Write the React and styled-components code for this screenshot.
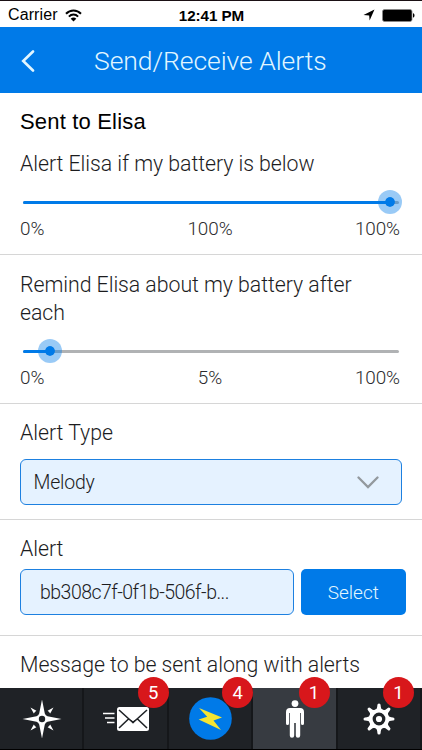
import React, { useState } from "react";
import styled, { createGlobalStyle } from "styled-components";

const GlobalStyle = createGlobalStyle`
  * {
    box-sizing: border-box;
  }

  body {
    margin: 0;
    background: #fff;
    font-family: Roboto, "Noto Sans", sans-serif;
    font-weight: 300;
    color: #1c1c1e;
  }
`;

const Screen = styled.div`
  display: flex;
  flex-direction: column;
  width: 422px;
  height: 750px;
  overflow: hidden;
  border-top: 1px solid #1a1014;
  background: #fff;
`;

const StatusBar = styled.div`
  display: grid;
  grid-template-columns: 1fr auto 1fr;
  align-items: center;
  flex: none;
  height: 26px;
  padding: 2px 7px 0 8px;
  font-family: "Liberation Sans", Arial, sans-serif;
  font-size: 16px;
  font-weight: 400;
  color: #000;
`;

const Carrier = styled.div`
  display: flex;
  align-items: center;
  gap: 7px;
  letter-spacing: 0.1px;
`;

const Clock = styled.div`
  font-size: 15.2px;
  font-weight: 700;
  letter-spacing: -0.05px;
`;

const StatusIcons = styled.div`
  display: flex;
  justify-content: flex-end;
  align-items: center;
  gap: 7px;
`;

const Header = styled.header`
  display: flex;
  align-items: center;
  flex: none;
  height: 66px;
  padding: 1px 0 0 21px;
  background: #007ae8;
  color: #e2f6ff;
`;

const BackButton = styled.button`
  display: flex;
  width: 73px;
  padding: 0;
  border: none;
  background: none;
  color: inherit;
`;

const Title = styled.h1`
  margin: 0;
  font-size: 26.5px;
  font-weight: 300;
  letter-spacing: -0.05px;
  white-space: nowrap;
`;

const Content = styled.main`
  flex: none;
  height: 595px;
  overflow: hidden;
`;

const Section = styled.section`
  height: ${({ $height }) => $height}px;
  padding: ${({ $top }) => $top}px 20px 0;
  border-bottom: 1px solid #d6d6d6;
`;

const Heading = styled.h2`
  margin: 0 0 14px;
  font-family: "Liberation Sans", Arial, sans-serif;
  font-size: 22px;
  line-height: 28px;
  font-weight: 400;
  color: #000;
  letter-spacing: 0.18px;
`;

const Label = styled.div`
  padding-right: 20px;
  font-size: 21.3px;
  line-height: 28px;
  letter-spacing: -0.05px;
`;

const Slider = styled.div`
  position: relative;
  display: flex;
  align-items: center;
  height: 24px;
  margin: 12px 0 0 3px;
`;

const Track = styled.div`
  width: 376px;
  height: 3px;
  border-radius: 2px;
  overflow: hidden;
  background: #b0b2b4;
`;

const Fill = styled.div`
  height: 100%;
  background: #007ae8;
`;

const Thumb = styled.div`
  position: absolute;
  top: 0;
  width: 24px;
  height: 24px;
  margin-left: -12px;
  border: 7.5px solid rgba(0, 122, 232, 0.4);
  border-radius: 50%;
  background: #007ae8;
  background-clip: padding-box;
`;

const Scale = styled.div`
  display: grid;
  grid-template-columns: 1fr auto 1fr;
  width: 380px;
  margin-top: 3px;
  font-size: 18.9px;
  line-height: 24px;
  letter-spacing: -0.1px;
  color: #2c2c2e;

  span:last-child {
    text-align: right;
  }
`;

const FieldRow = styled.div`
  display: flex;
  gap: 6.5px;
  margin-top: ${({ $top }) => $top}px;
`;

const Field = styled.div`
  display: flex;
  align-items: center;
  justify-content: space-between;
  flex: none;
  width: ${({ $width }) => $width}px;
  height: 46px;
  padding: 0 22px 0 ${({ $left }) => $left}px;
  border: 1.5px solid #1d80e0;
  border-radius: 6px;
  background: #e5f2ff;
  font-size: 19.5px;
  letter-spacing: ${({ $spacing }) => $spacing || 0}px;
`;

const SelectButton = styled.button`
  flex: none;
  width: 105.5px;
  height: 46px;
  padding: 0;
  border: none;
  border-radius: 5px;
  background: #007ae8;
  color: #e2f6ff;
  font: 300 19px Roboto, sans-serif;
`;

const TabBar = styled.nav`
  display: flex;
  flex: none;
  height: 62px;
  background: #1f2226;
  border-bottom: 1px solid #000;
`;

const Tab = styled.div`
  position: relative;
  display: flex;
  align-items: center;
  justify-content: center;
  flex: none;
  width: 84.4px;
  padding-left: ${({ $indent }) => $indent || 0}px;
  border-right: 2px solid #15171a;
  background: ${({ $active }) => ($active ? "#373b41" : "#1f2226")};
`;

const Badge = styled.span`
  position: absolute;
  top: -11px;
  right: ${({ $right }) => $right}px;
  width: 31px;
  height: 31px;
  border-radius: 50%;
  background: #d8171b;
  color: #fff;
  font-size: 18.5px;
  font-weight: 400;
  line-height: 32px;
  text-align: center;
`;

const WifiIcon = () => (
  <svg width="17" height="13" viewBox="0 0 17 13">
    <g fill="none" stroke="#000" strokeWidth="2">
      <path d="M1 4.800C5.200.5 11.800.5 16 4.800" />
      <path d="M3.900 7.600c2.600-2.700 6.600-2.700 9.200 0" />
    </g>
    <path d="M8.500 12.600 5.700 9.700c1.600-1.600 4-1.600 5.600 0z" />
  </svg>
);

const LocationIcon = () => (
  <svg width="12" height="12" viewBox="0 0 12 12">
    <path d="M11.500.5 6.600 11.500 6.200 6.400.5 6z" />
  </svg>
);

const BatteryIcon = () => (
  <svg width="33" height="13" viewBox="0 0 33 13">
    <rect x=".5" y=".5" width="29.5" height="12" rx="2" stroke="#888" strokeWidth=".8" />
    <path d="M31 4.300c2 .5 2 3.900 0 4.400z" />
  </svg>
);

const BackIcon = () => (
  <svg width="14" height="22" viewBox="0 0 14 22">
    <path d="M12 1.500 2.200 11 12 20.500" fill="none" stroke="currentColor" strokeWidth="2.6" strokeLinecap="round" />
  </svg>
);

const ChevronIcon = () => (
  <svg width="22" height="13" viewBox="0 0 22 13">
    <path d="M1.500 1.500 11 11l9.500-9.500" fill="none" stroke="#93999e" strokeWidth="2.3" strokeLinecap="round" />
  </svg>
);

const CompassIcon = () => (
  <svg width="40" height="40" viewBox="-20 -20 40 40">
    <g fill="#fff">
      <path d="M0-19.500 2.800-5.500Q3.500-3.500 5.500-2.800L19.500 0 5.500 2.800Q3.500 3.500 2.800 5.500L0 19.500-2.800 5.500Q-3.500 3.500-5.500 2.800L-19.500 0-5.500-2.800Q-3.500-3.500-2.800-5.500z" />
      {[0, 90, 180, 270].map((angle) => (
        <path key={angle} transform={`rotate(${angle})`} d="M11.500-11.500 8.200-5.600Q7.200-7.200 5.600-8.200z" />
      ))}
    </g>
    <circle r="3.2" fill="#1f2226" />
  </svg>
);

const MailIcon = () => (
  <svg width="48" height="26" viewBox="0 0 48 26">
    <path d="M1 7.500h11.500M3 12h9.500M5 16.500h7.500" stroke="#fff" strokeWidth="1.5" />
    <rect x="15" y="1" width="32" height="24" rx="2.5" fill="#fff" />
    <path d="M17 4 27.500 13.500l3.500 3 3.500-3L45 4M17 22l9.500-9M45 22l-9.500-9" fill="none" stroke="#1f2226" strokeWidth="1.6" />
    <path d="M26.500 12.600 31 17.500l4.500-4.900L31 15.200z" fill="#1f2226" />
  </svg>
);

const BoltIcon = () => (
  <svg width="43" height="43" viewBox="0 0 43 43">
    <circle cx="21.5" cy="21.5" r="21.3" fill="#007ae8" />
    <path d="M10 11 33 20.500 24.500 23.600 32 33 9.700 22.500 18.200 19.800z" fill="#f5e532" />
  </svg>
);

const PersonIcon = () => (
  <svg width="18" height="38" viewBox="0 0 18 38">
    <g fill="#fff">
      <circle cx="9" cy="3.6" r="3.4" />
      <path d="M4 8h10a4 4 0 0 1 4 4v11.500a1.500 1.500 0 0 1-3 0V13h-.8v22.500a2.200 2.200 0 0 1-4.400 0V23H8.200v12.500a2.200 2.200 0 0 1-4.400 0V13H3v10.500a1.500 1.500 0 0 1-3 0V12a4 4 0 0 1 4-4z" />
    </g>
  </svg>
);

const GearIcon = () => (
  <svg width="32" height="32" viewBox="-16 -16 32 32">
    {[0, 45, 90, 135, 180, 225, 270, 315].map((angle) => (
      <path
        key={angle}
        transform={`rotate(${angle})`}
        d="M-3.500-9Q-1.800-10-1.600-14Q-1.600-15.500 0-15.500Q1.600-15.500 1.600-14Q1.800-10 3.500-9z"
        fill="#fff"
      />
    ))}
    <circle r="8.3" fill="none" stroke="#fff" strokeWidth="3.8" />
    <circle r="3.1" fill="#fff" />
  </svg>
);

const tabs = [
  { id: "compass", icon: <CompassIcon />, indent: 1 },
  { id: "mail", icon: <MailIcon />, badge: 5, badgeRight: -2 },
  { id: "power", icon: <BoltIcon />, indent: 1, badge: 4, badgeRight: -2 },
  { id: "people", icon: <PersonIcon />, indent: 1, badge: 1, badgeRight: 6 },
  { id: "settings", icon: <GearIcon />, badge: 1, badgeRight: 6 },
];

function RangeSlider({ position, value }) {
  return (
    <>
      <Slider>
        <Track>
          <Fill style={{ width: position }} />
        </Track>
        <Thumb style={{ left: position }} />
      </Slider>
      <Scale>
        <span>0%</span>
        <span>{value}%</span>
        <span>100%</span>
      </Scale>
    </>
  );
}

function App() {
  const [active, setActive] = useState("people");

  return (
    <>
      <GlobalStyle />
      <Screen>
        <StatusBar>
          <Carrier>
            Carrier
            <WifiIcon />
          </Carrier>
          <Clock>12:41 PM</Clock>
          <StatusIcons>
            <LocationIcon />
            <BatteryIcon />
          </StatusIcons>
        </StatusBar>
        <Header>
          <BackButton>
            <BackIcon />
          </BackButton>
          <Title>Send/Receive Alerts</Title>
        </Header>
        <Content>
          <Section $height={162} $top={15}>
            <Heading>Sent to Elisa</Heading>
            <Label>Alert Elisa if my battery is below</Label>
            <RangeSlider position={367} value={100} />
          </Section>
          <Section $height={149} $top={16}>
            <Label>Remind Elisa about my battery after each</Label>
            <RangeSlider position={27} value={5} />
          </Section>
          <Section $height={116} $top={15}>
            <Label>Alert Type</Label>
            <FieldRow $top={12}>
              <Field $width={382} $left={12.5} $spacing={-0.2}>
                Melody
                <ChevronIcon />
              </Field>
            </FieldRow>
          </Section>
          <Section $height={116} $top={15}>
            <Label>Alert</Label>
            <FieldRow $top={6}>
              <Field $width={274} $left={19} $spacing={-0.52}>
                bb308c7f-0f1b-506f-b...
              </Field>
              <SelectButton>Select</SelectButton>
            </FieldRow>
          </Section>
          <Section $height={60} $top={15}>
            <Label>Message to be sent along with alerts</Label>
          </Section>
        </Content>
        <TabBar>
          {tabs.map((tab) => (
            <Tab
              key={tab.id}
              $active={tab.id === active}
              $indent={tab.indent}
              onClick={() => setActive(tab.id)}
            >
              {tab.icon}
              {tab.badge && <Badge $right={tab.badgeRight}>{tab.badge}</Badge>}
            </Tab>
          ))}
        </TabBar>
      </Screen>
    </>
  );
}

export default App;
